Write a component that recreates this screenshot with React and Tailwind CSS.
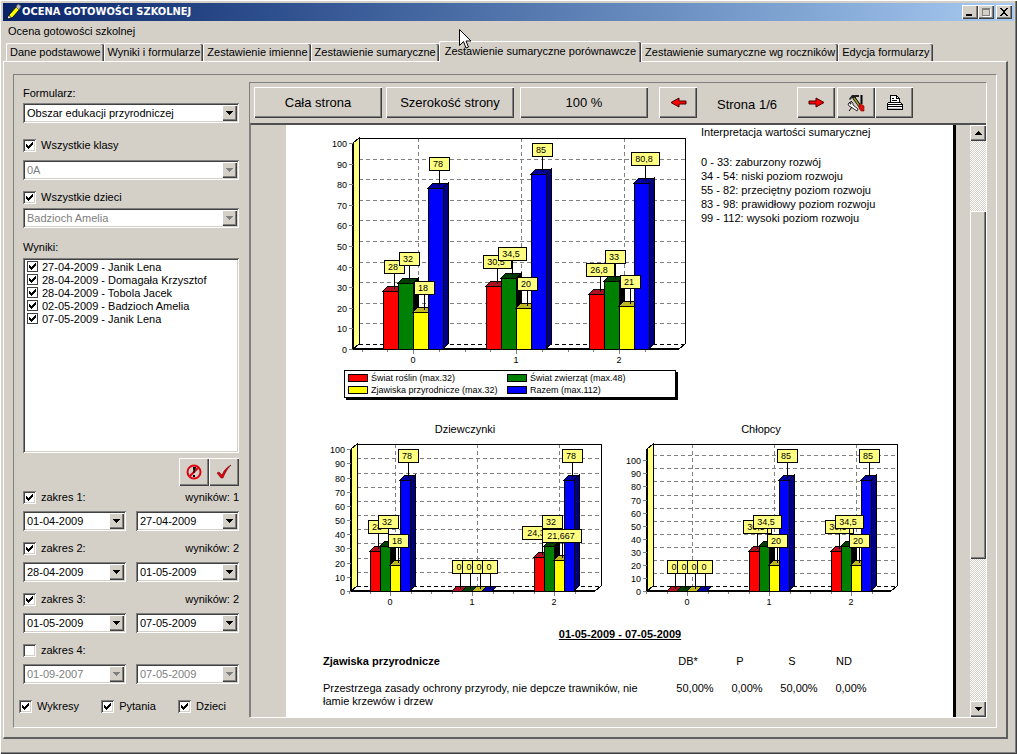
import React, { useState } from "react";
import clsx from "clsx";

const raised =
  "bg-[#d4d0c8] shadow-[inset_1px_1px_0_#fff,inset_-1px_-1px_0_#404040,inset_-2px_-2px_0_#808080]";
const sunken =
  "bg-white p-[2px] shadow-[inset_1px_1px_0_#808080,inset_-1px_-1px_0_#fff,inset_2px_2px_0_#404040,inset_-2px_-2px_0_#d4d0c8]";
const groove = "border border-t-[#808080] border-l-[#808080] border-r-white border-b-white";

const tabs = [
  "Dane podstawowe",
  "Wyniki i formularze",
  "Zestawienie imienne",
  "Zestawienie sumaryczne",
  "Zestawienie sumaryczne porównawcze",
  "Zestawienie sumaryczne wg roczników",
  "Edycja formularzy",
];

const results = [
  "27-04-2009 - Janik Lena",
  "28-04-2009 - Domagała Krzysztof",
  "28-04-2009 - Tobola Jacek",
  "02-05-2009 - Badzioch Amelia",
  "07-05-2009 - Janik Lena",
];

const ranges = [
  { label: "zakres 1:", from: "01-04-2009", to: "27-04-2009", count: 1 },
  { label: "zakres 2:", from: "28-04-2009", to: "01-05-2009", count: 2 },
  { label: "zakres 3:", from: "01-05-2009", to: "07-05-2009", count: 2 },
  { label: "zakres 4:", from: "01-09-2007", to: "07-05-2009", count: null },
];

const series = [
  { name: "Świat roślin (max.32)", fill: "#ff0000", top: "#b01020", side: "#800000", swatch: "bg-[#ff0000]" },
  { name: "Świat zwierząt (max.48)", fill: "#008000", top: "#004000", side: "#000000", swatch: "bg-[#008000]" },
  { name: "Zjawiska przyrodnicze (max.32)", fill: "#ffff00", top: "#c0b820", side: "#808000", swatch: "bg-[#ffff00]" },
  { name: "Razem (max.112)", fill: "#0000ff", top: "#0000a0", side: "#000080", swatch: "bg-[#0000ff]" },
];

const levels = [
  "0 - 33: zaburzony rozwój",
  "34 - 54: niski poziom rozwoju",
  "55 - 82: przeciętny poziom rozwoju",
  "83 - 98: prawidłowy poziom rozwoju",
  "99 - 112: wysoki poziom rozwoju",
];

const Checkbox = ({ label, checked, onChange, flat }) => (
  <label className={clsx("flex items-center gap-1", flat ? "h-[13px]" : "h-4")}>
    <span className="grid shrink-0">
      <input
        type="checkbox"
        checked={checked}
        onChange={onChange}
        className={clsx(
          "peer col-start-1 row-start-1 appearance-none",
          flat ? "size-[11px] border border-[#404040] bg-white" : "size-[13px] " + sunken
        )}
      />
      <svg
        viewBox="0 0 7 7"
        className="pointer-events-none invisible col-start-1 row-start-1 size-[7px] place-self-center peer-checked:visible"
        shapeRendering="crispEdges"
      >
        <path d="M0 2h1v1h1v1h1v-1h1v-1h1v-1h1v-1h1v3h-1v1h-1v1h-1v1h-1v1h-1v-1h-1v-1h-1z" />
      </svg>
    </span>
    <span className={flat ? "" : "px-px"}>{label}</span>
  </label>
);

const Combo = ({ id, value, label, disabled, className }) => (
  <div className={clsx("grid h-5", sunken, className)}>
    <select
      id={id}
      aria-label={label}
      disabled={disabled}
      defaultValue={value}
      className="col-start-1 row-start-1 h-4 w-full min-w-0 appearance-none bg-white pl-[2px] leading-4 disabled:text-[#808080] disabled:opacity-100"
    >
      <option>{value}</option>
    </select>
    <span
      className={clsx(
        "pointer-events-none col-start-1 row-start-1 flex h-4 w-[15px] items-center justify-center justify-self-end",
        raised
      )}
    >
      <svg viewBox="0 0 7 4" className="h-1 w-[7px]" shapeRendering="crispEdges">
        <path d="M0 0h7v1h-1v1h-1v1h-1v1h-1v-1h-1v-1h-1v-1h-1z" fill={disabled ? "#808080" : "#000"} />
      </svg>
    </span>
  </div>
);

const BarChart = ({ width, height, x0, y0, yTop, scale, plotWidth, first, step, bar, data }) => {
  const dx = 6;
  const dy = 5;
  const right = x0 + plotWidth;
  const ticks = Array.from({ length: 11 }, (_, i) => i * 10);
  const bars = data.flatMap((group, g) =>
    group.map((value, s) => ({
      value,
      s,
      x: first + g * step + (s - 2) * bar,
      y: Math.round(y0 - value * scale),
    }))
  );

  return (
    <svg
      width={width}
      height={height}
      viewBox={`0 0 ${width} ${height}`}
      className="block shrink-0 text-[9px]"
      shapeRendering="crispEdges"
    >
      {/* grid */}
      {ticks.slice(1).map((t) => (
        <path
          key={t}
          d={`M${x0 + dx} ${Math.round(y0 - t * scale) - dy}H${right + dx}`}
          stroke="#808080"
          strokeDasharray="4 3"
        />
      ))}
      {data.map((_, g) => (
        <path
          key={g}
          d={`M${first + g * step + dx - 1} ${yTop - dy}V${y0 - dy}`}
          stroke="#808080"
          strokeDasharray="4 3"
        />
      ))}

      {/* walls and floor */}
      <path d={`M${x0} ${yTop}l${dx} ${-dy}V${y0 - dy}L${x0} ${y0}z`} fill="#ffff80" stroke="#000" />
      <path
        d={`M${x0 + dx} ${yTop - dy}H${right + dx}V${y0 - dy}l${-dx} ${dy}`}
        fill="none"
        stroke="#000"
      />
      <path d={`M${x0 + dx} ${y0 - dy}H${right + dx}`} stroke="#000" strokeDasharray="4 3" />

      {/* axes */}
      <path d={`M${x0} ${yTop}V${y0}`} stroke="#000" strokeWidth="2" />
      <path d={`M${x0} ${y0}H${right}`} stroke="#000" strokeWidth="2" />
      {ticks.map((t) => {
        const y = Math.round(y0 - t * scale);
        return (
          <g key={t}>
            <path d={`M${x0 - 4} ${y}h4`} stroke="#808080" />
            <text x={x0 - 6} y={y + 4} textAnchor="end">
              {t}
            </text>
          </g>
        );
      })}
      {Array.from({ length: 12 }, (_, i) => (
        <path
          key={i}
          d={`M${Math.round(first + ((i - 2) * step) / 4)} ${y0 + 1}v${i % 4 === 2 ? 4 : 2}`}
          stroke="#808080"
        />
      ))}
      {data.map((_, g) => (
        <text key={g} x={first + g * step} y={y0 + 14} textAnchor="middle">
          {g}
        </text>
      ))}

      {bars.map(({ x, y, s }, i) => (
        <g key={i} stroke="#000">
          <path d={`M${x} ${y}l5 -5h${bar}l-5 5z`} fill={series[s].top} />
          <path d={`M${x + bar} ${y}l5 -5V${y0 - 5}l-5 5z`} fill={series[s].side} />
          {y < y0 && <rect x={x} y={y} width={bar} height={y0 - y} fill={series[s].fill} />}
        </g>
      ))}

      {/* value marks */}
      {bars.map(({ value, x, y }, i) => {
        const text = String(value).replace(".", ",");
        const digits = text.replace(",", "").length;
        const w = Math.round(9 + digits * 5.5 + (text.length - digits) * 2.5);
        const cx = x + Math.round(bar / 2) + 3;
        return (
          <g key={i}>
            <path d={`M${cx} ${y - 18}V${y - 2}`} stroke="#000" />
            <rect x={cx - Math.round(w / 2)} y={y - 31} width={w} height="13" fill="#ffff80" stroke="#000" />
            <text x={cx - 1} y={y - 21} textAnchor="middle">
              {text}
            </text>
          </g>
        );
      })}
    </svg>
  );
};

const PencilLogo = () => (
  <svg viewBox="0 0 16 16" className="size-4">
    <path d="M3 11l8-9 3 3-8 9-3 0z" fill="#ffff00" stroke="#000" strokeWidth="0.8" />
    <path d="M10 3l2-3 3 2-2 4z" fill="#c0c0c0" stroke="#606060" strokeWidth="0.8" />
    <path d="M1 15l1.500-4 3 3z" fill="#fff" stroke="#000" strokeWidth="0.8" />
  </svg>
);

const RedArrow = ({ flip }) => (
  <svg viewBox="0 0 17 11" className={clsx("h-[11px] w-[17px]", flip && "-scale-x-100")}>
    <path d="M1 4h7V1l8 4.5L8 10V7H1z" fill="#ff0000" stroke="#400000" />
  </svg>
);

const ToolsIcon = () => (
  <svg viewBox="0 0 18 18" className="size-[18px]">
    <path d="M2 5l3-4h7v2H9L8 6 5 4 3 6z" fill="#202020" />
    <path d="M7 4l8 11" stroke="#000" strokeWidth="3" />
    <path d="M7 4l7 10" stroke="#a0a020" strokeWidth="1.5" />
    <path d="M14.500 1v9" stroke="#000" strokeWidth="2" />
    <path d="M12 11l2-1 3 2v5h-3l-2-3z" fill="#e01010" stroke="#800000" strokeWidth="0.6" />
    <path
      d="M3 8l-2 2 1 2 2 1 6 4 1-2-5-4 0-2-2-2 0 3-1 0z"
      fill="#fff"
      stroke="#000"
      strokeWidth="0.8"
    />
    <path d="M2 17l3-4" stroke="#000" />
  </svg>
);

const PrinterIcon = () => (
  <svg viewBox="0 0 17 17" className="size-[17px]" shapeRendering="crispEdges">
    <path d="M4 9V1h6l3 3v5z" fill="#fff" stroke="#000" />
    <path d="M10 1v3h3M6 4h2M6 6h5" fill="none" stroke="#000" />
    <path d="M1 10l2-2h11l2 2v5H1z" fill="#fff" stroke="#000" />
    <path d="M1 10h15M1 12h15" stroke="#000" />
    <path d="M2 14h13" stroke="#c0c0c0" />
  </svg>
);

const StopIcon = () => (
  <svg viewBox="0 0 16 16" className="size-4">
    <path d="M3.500 12.500l9-9" stroke="#e00010" strokeWidth="2" />
    <path d="M7 3h3l-1.500 6h-1zM7 11h2v2h-2z" fill="#000" />
    <circle cx="8" cy="8" r="6.500" fill="none" stroke="#e00010" strokeWidth="2" />
  </svg>
);

const ApplyIcon = () => (
  <svg viewBox="0 0 16 16" className="size-4">
    <path d="M1 9l2-1 3 3c2-5 5-8 9-10-4 4-6 8-8 13H5z" fill="#e00010" stroke="#600000" strokeWidth="0.5" />
  </svg>
);

const TitleButton = ({ label, children }) => (
  <button aria-label={label} className={clsx("flex h-[14px] w-4 items-center justify-center", raised)}>
    <svg viewBox="0 0 10 10" className="size-[10px]" shapeRendering="crispEdges">
      {children}
    </svg>
  </button>
);

const ToolButton = ({ label, children, className }) => (
  <button
    aria-label={label}
    className={clsx("flex h-[31px] items-center justify-center", raised, className)}
  >
    {children}
  </button>
);

const TitleBar = () => (
  <header className="flex h-[18px] items-center bg-linear-to-r from-[#0a246a] to-[#a6caf0] pr-[2px] pl-[3px]">
    <PencilLogo />
    <h1 className="flex-1 font-['DejaVu_Sans_Condensed','DejaVu_Sans',sans-serif] text-[11px] font-bold text-white">
      OCENA GOTOWOŚCI SZKOLNEJ
    </h1>
    <TitleButton label="Minimalizuj">
      <path d="M1 7h6v2H1z" />
    </TitleButton>
    <TitleButton label="Maksymalizuj">
      <path d="M1 1h8v8H1zM2 3v5h6V3z" fill="#808080" fillRule="evenodd" />
      <path d="M9 2h1v8H2V9h7z" fill="#fff" />
    </TitleButton>
    <span className="w-[2px]" />
    <TitleButton label="Zamknij">
      <path d="M1 1h2v1h1v1h2V2h1V1h2v1H8v1H7v1H6v2h1v1h1v1h1v1H7V8H6V7H4v1H3v1H1V8h1V7h1V6h1V4H3V3H2V2H1z" />
    </TitleButton>
  </header>
);

const Sidebar = () => {
  const [allClasses, setAllClasses] = useState(true);
  const [allChildren, setAllChildren] = useState(true);
  const [picked, setPicked] = useState(results.map(() => true));
  const [active, setActive] = useState([true, true, true, false]);
  const [parts, setParts] = useState({ Wykresy: true, Pytania: true, Dzieci: true });

  const toggle = (list, index) => list.map((v, i) => (i === index ? !v : v));

  return (
    <aside className="flex w-[235px] shrink-0 flex-col pt-[10px] pr-[10px] pb-[13px] pl-[9px] leading-4">
      <label htmlFor="form">Formularz:</label>
      <Combo id="form" value="Obszar edukacji przyrodniczej" className="mt-[2px] mb-[14px]" />
      <Checkbox label="Wszystkie klasy" checked={allClasses} onChange={() => setAllClasses(!allClasses)} />
      <Combo label="Klasa" value="0A" disabled={allClasses} className="mt-[7px] mb-[9px]" />
      <Checkbox label="Wszystkie dzieci" checked={allChildren} onChange={() => setAllChildren(!allChildren)} />
      <Combo label="Dziecko" value="Badzioch Amelia" disabled={allChildren} className="mt-[3px] mb-[11px]" />

      <p>Wyniki:</p>
      <div className={clsx("mt-[3px] min-h-24 flex-1 pl-1", sunken)}>
        {results.map((r, i) => (
          <Checkbox key={r} flat label={r} checked={picked[i]} onChange={() => setPicked(toggle(picked, i))} />
        ))}
      </div>

      <div className="mt-[5px] mb-[3px] flex justify-end">
        <button aria-label="Wyczyść" className={clsx("flex h-7 w-[30px] items-center justify-center", raised)}>
          <StopIcon />
        </button>
        <button aria-label="Zastosuj" className={clsx("flex h-7 w-[30px] items-center justify-center", raised)}>
          <ApplyIcon />
        </button>
      </div>

      <div className="flex flex-col gap-[9px]">
        {ranges.map((r, i) => (
          <div key={r.label} className="flex flex-col gap-[6px]">
            <div className="flex justify-between">
              <Checkbox label={r.label} checked={active[i]} onChange={() => setActive(toggle(active, i))} />
              {r.count !== null && <span>wyników: {r.count}</span>}
            </div>
            <div className="flex gap-[10px]">
              <Combo label={`${r.label} od`} value={r.from} disabled={!active[i]} className="flex-1" />
              <Combo label={`${r.label} do`} value={r.to} disabled={!active[i]} className="flex-1" />
            </div>
          </div>
        ))}
      </div>

      <div className="-ml-1 mt-[14px] flex justify-between pr-3">
        {Object.keys(parts).map((name) => (
          <Checkbox
            key={name}
            label={name}
            checked={parts[name]}
            onChange={() => setParts({ ...parts, [name]: !parts[name] })}
          />
        ))}
      </div>
    </aside>
  );
};

const Toolbar = () => (
  <div className="flex items-start px-1 pt-1 pb-[5px] text-[13px]">
    <ToolButton className="mr-1 w-32">Cała strona</ToolButton>
    <ToolButton className="mr-[6px] w-32">Szerokość strony</ToolButton>
    <ToolButton className="mr-[11px] w-32">100 %</ToolButton>
    <ToolButton label="Poprzednia strona" className="w-[38px]">
      <RedArrow flip />
    </ToolButton>
    <span className="w-[100px] pt-2 text-center">Strona 1/6</span>
    <ToolButton label="Następna strona" className="mr-[2px] w-[38px]">
      <RedArrow />
    </ToolButton>
    <ToolButton label="Ustawienia" className="w-[38px]">
      <ToolsIcon />
    </ToolButton>
    <ToolButton label="Drukuj" className="w-[38px]">
      <PrinterIcon />
    </ToolButton>
  </div>
);

const Report = () => (
  <article className="ml-[35px] flex-1 border-r-[3px] border-black bg-white pb-2 pl-[37px] leading-[13px]">
    <section className="flex gap-[11px] pl-[3px]">
      <div>
        <BarChart
          width={364}
          height={244}
          x0={27}
          y0={224}
          yTop={18}
          scale={2.06}
          plotWidth={326}
          first={87}
          step={103}
          bar={15}
          data={[
            [28, 32, 18, 78],
            [30.5, 34.5, 20, 85],
            [26.8, 33, 21, 80.8],
          ]}
        />
        <ul className="mt-px ml-[18px] grid w-[332px] grid-cols-[159px_1fr] border border-black px-[3px] py-px text-[9px] leading-3 shadow-[2px_2px_0_#000]">
          {series.map((s) => (
            <li key={s.name} className="flex items-center gap-[3px] whitespace-nowrap">
              <span className={clsx("h-2 w-5 shrink-0 border border-black", s.swatch)} />
              {s.name}
            </li>
          ))}
        </ul>
      </div>
      <div className="pt-px">
        <h2>Interpretacja wartości sumarycznej</h2>
        <ul className="mt-4 leading-[14px]">
          {levels.map((l) => (
            <li key={l}>{l}</li>
          ))}
        </ul>
      </div>
    </section>

    <section className="mt-[23px] flex pl-[3px]">
      <figure>
        <figcaption className="pr-4 pb-px text-center leading-4">Dziewczynki</figcaption>
        <BarChart
          width={294}
          height={172}
          x0={25}
          y0={153}
          yTop={11}
          scale={1.417}
          plotWidth={244}
          first={64}
          step={82}
          bar={10}
          data={[
            [28, 32, 18, 78],
            [0, 0, 0, 0],
            [24.333, 32, 21.667, 78],
          ]}
        />
      </figure>
      <figure>
        <figcaption className="pr-3 pb-px text-center leading-4">Chłopcy</figcaption>
        <BarChart
          width={294}
          height={172}
          x0={27}
          y0={153}
          yTop={11}
          scale={1.307}
          plotWidth={244}
          first={67}
          step={82}
          bar={10}
          data={[
            [0, 0, 0, 0],
            [30.5, 34.5, 20, 85],
            [30.5, 34.5, 20, 85],
          ]}
        />
      </figure>
    </section>

    <h2 className="mt-4 pr-9 text-center leading-4 font-bold underline">01-05-2009 - 07-05-2009</h2>

    <table className="mt-[11px] w-[554px] table-fixed">
      <thead>
        <tr>
          <th className="w-[346px] pb-[13px] text-left leading-4 font-bold">Zjawiska przyrodnicze</th>
          {["DB*", "P", "S", "ND"].map((h) => (
            <th key={h} className="pr-[14px] pb-[13px] font-normal">
              {h}
            </th>
          ))}
        </tr>
      </thead>
      <tbody>
        <tr className="align-top">
          <td className="pr-6">Przestrzega zasady ochrony przyrody, nie depcze trawników, nie łamie krzewów i drzew</td>
          <td className="text-center">50,00%</td>
          <td className="text-center">0,00%</td>
          <td className="text-center">50,00%</td>
          <td className="text-center">0,00%</td>
        </tr>
      </tbody>
    </table>
  </article>
);

const ScrollBar = () => (
  <div className="ml-[14px] flex w-4 shrink-0 flex-col bg-[repeating-conic-gradient(#fff_0_25%,#d4d0c8_0_50%)] bg-size-[2px_2px]">
    <button aria-label="W górę" className={clsx("flex h-4 items-center justify-center", raised)}>
      <svg viewBox="0 0 7 4" className="h-1 w-[7px]" shapeRendering="crispEdges">
        <path d="M0 4h7v-1h-1v-1h-1v-1h-1v-1h-1v1h-1v1h-1v1h-1z" />
      </svg>
    </button>
    <div className="grid flex-1 grid-rows-[70fr_348fr_142fr]">
      <div className={clsx("row-start-2", raised)} />
    </div>
    <button aria-label="W dół" className={clsx("flex h-4 items-center justify-center", raised)}>
      <svg viewBox="0 0 7 4" className="h-1 w-[7px]" shapeRendering="crispEdges">
        <path d="M0 0h7v1h-1v1h-1v1h-1v1h-1v-1h-1v-1h-1v-1h-1z" />
      </svg>
    </button>
  </div>
);

const Pointer = () => (
  <svg
    viewBox="0 0 13 21"
    className="pointer-events-none absolute top-[29px] left-[459px] z-20 h-[21px] w-[13px]"
  >
    <path d="M.5.5v16l4-4 2.500 6.500 2.500-1-2.500-6h5z" fill="#fff" stroke="#000" />
  </svg>
);

export default function App() {
  const [tab, setTab] = useState(4);

  return (
    <div
      className={clsx(
        "relative flex min-h-screen flex-col p-[3px] pb-[15px] font-['Liberation_Sans',Arial,sans-serif] text-[11px] text-black",
        raised
      )}
    >
      <TitleBar />
      <nav className="flex h-5 items-center pl-[5px]">
        <button>Ocena gotowości szkolnej</button>
      </nav>

      <div role="tablist" className="flex h-5 items-end pl-[3px]">
        {tabs.map((t, i) => (
          <button
            key={t}
            role="tab"
            aria-selected={tab === i}
            onClick={() => setTab(i)}
            className={clsx(
              "rounded-t-[2px] border-t border-l border-t-white border-l-white bg-[#d4d0c8] whitespace-nowrap shadow-[inset_-1px_0_0_#404040,inset_-2px_0_0_#808080]",
              tab === i ? "z-10 -mb-px h-[21px] px-[5px] pb-[2px]" : "h-[18px] px-[3px]"
            )}
          >
            {t}
          </button>
        ))}
      </div>

      <main className="mr-[6px] flex flex-1 border-t border-r-2 border-b-2 border-l border-t-white border-r-[#606060] border-b-[#606060] border-l-white pt-3 pr-[9px] pb-[9px] pl-[9px]">
        <div className={clsx("flex flex-1 pt-[7px] pr-[9px] pb-[9px]", groove)}>
          <div className="-mt-[7px] -mb-[9px] flex">
            <Sidebar />
          </div>
          <div className={clsx("flex flex-1 flex-col", groove)}>
            <Toolbar />
            <div className="flex flex-1 border-t-2 border-l border-t-[#505050] border-l-[#808080]">
              <Report />
              <ScrollBar />
            </div>
          </div>
        </div>
      </main>
      <Pointer />
    </div>
  );
}
